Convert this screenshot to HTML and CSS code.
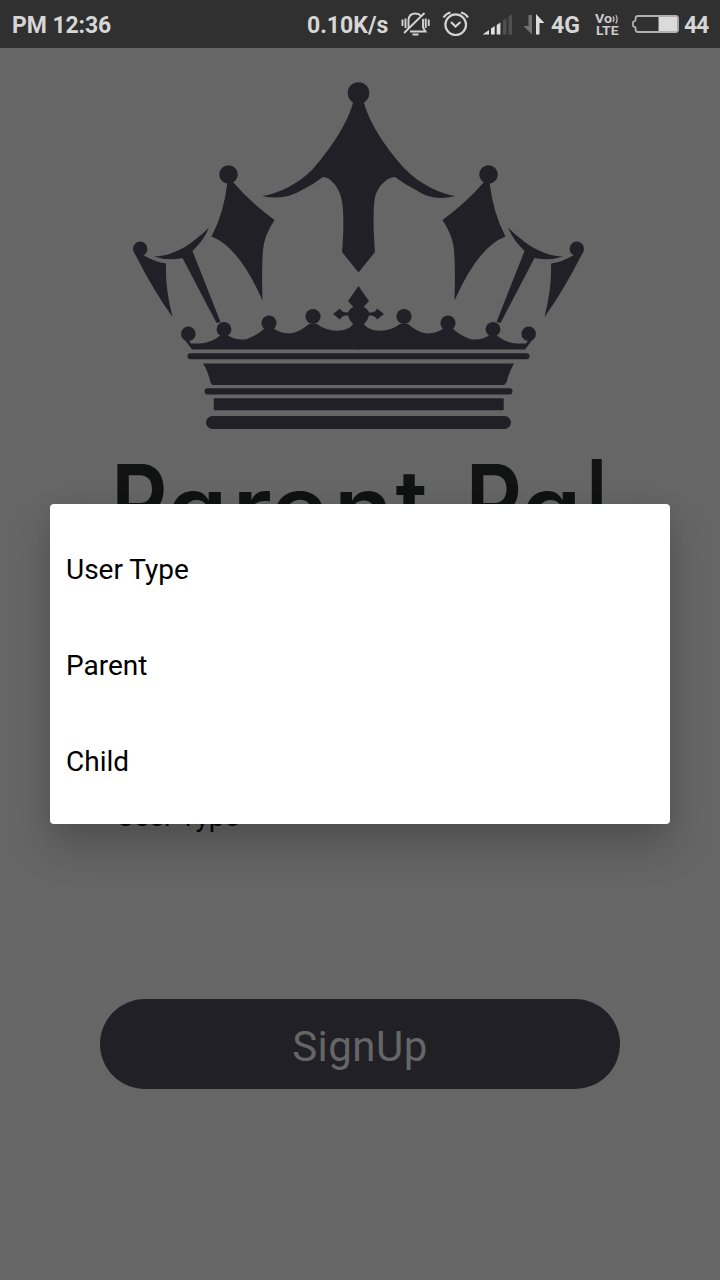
FILE: index.html
```html
<!DOCTYPE html>
<html lang="en">
<head>
<meta charset="utf-8">
<title>Parent Pal</title>
<link rel="stylesheet" href="styles.css">
</head>
<body>
<div class="screen">
  <header class="status">
    <span class="time">PM 12:36</span>
    <span class="speed">0.10K/s</span>
    <svg class="icons" width="152" height="48" viewBox="396 0 152 48">
      <g fill="none" stroke="#d2d2d2" stroke-width="1.9">
        <path d="M408.500 28V20Q409 13.500 415.500 13.500Q419 13.500 421 16M423 19V27.500L425.500 31.500H410M404 33L424.500 13M412.500 34.500H418.500"/>
        <path d="M402.500 19.500V26M405.500 18.500V28M425.700 18.500V28M428.700 19.500V26"/>
        <circle cx="455.700" cy="24.700" r="10.300" stroke-width="2.200"/>
        <path d="M451 22L455.500 26.500L460.500 22M443.500 17.500Q446 13.500 450.500 12.500M461 12.500Q465.500 13.500 468 17.500" stroke-width="2.200"/>
      </g>
      <path fill="#dedede" d="M482.500 34.500L489 30V34.500ZM491 34.500V28.500L494.700 26V34.500ZM496.700 34.500V25L500.400 22.500V34.500Z"/>
      <path fill="#505050" d="M508.500 17L512 14V34.500H508.500Z"/>
      <path fill="#505050" d="M503 20.500L506.500 18V34.500H503Z"/>
      <path fill="#727272" d="M528.500 15H532V34.500L523.500 26H528.500Z"/>
      <path fill="#dedede" d="M536 14L544.500 23H539.500V34.500H536Z"/>
    </svg>
    <span class="net">4G</span>
    <svg class="volte" width="26" height="48" viewBox="594 0 26 48">
      <text class="volte-text" x="595" y="23" textLength="17" lengthAdjust="spacingAndGlyphs">Vo</text>
      <text class="volte-text" x="596" y="34.700" textLength="22.500" lengthAdjust="spacingAndGlyphs">LTE</text>
      <path fill="none" stroke="#bdbdbd" stroke-width="1.300" d="M613 16.500Q615 19 613 22M615.800 15Q618.500 19 615.800 23.500"/>
    </svg>
    <svg class="battery" width="48" height="48" viewBox="632 0 48 48">
      <path d="M638 16H675.500Q678 16 678 18.500V29.500Q678 32 675.500 32H638Q635.500 32 635.500 29V27.500L633 26V22L635.500 20.500V19Q635.500 16 638 16Z" fill="none" stroke="#b0b0b0" stroke-width="1.800"/>
      <path d="M658.500 17H677V31H658.500Z" fill="#dadada"/>
    </svg>
    <span class="level">44</span>
  </header>
  <main class="page">
    <svg class="logo" width="720" height="480" viewBox="0 48 720 480">
      <g fill="#212026">
        <circle cx="358.500" cy="93" r="10.800"/>
        <path d="M353.500 101H363.500C369 124 389 152 406 170C420 184 440 194 455.500 196Q433 202 416 190Q404 184 395 177C387 177 378 186 375 197C373 208 373 229 375 252L358.500 272.500L342 252C344 229 344 208 341 197C338 186 330 177 323 177Q314 184 302 190Q284 201 262 196C278 194 298 184 312 170C328 152 348 124 353.500 101Z"/>
        <g id="side">
          <circle cx="228.500" cy="174.500" r="9.300"/>
          <path d="M227.500 182H233Q250 202 274.500 220Q264 236 263 250Q261.500 268 262.500 300.500Q239 247 211.500 236.500Q224 213 227.500 182Z"/>
          <circle cx="140.200" cy="248.800" r="7.200"/>
          <path d="M134.500 253L144 255.500Q155 262 166 263.500Q165 288 172.500 317Q153 290 134.500 253Z"/>
          <path d="M154 256.500C175 256 192 244 209 227.500Q204 240 192.500 251L220.500 322L216.500 323L182.500 258Q167 261 154 256.500Z"/>
          <circle cx="188.300" cy="333.800" r="7.300"/>
          <circle cx="224" cy="329.300" r="7.400"/>
          <circle cx="269" cy="323" r="7.600"/>
          <circle cx="313" cy="316.500" r="7.600"/>
          <path d="M359.500 322L354 324Q350 328 344 330C334 332 325 330 317 324H309Q301 331 293 333Q282 335 273 328H265Q258 335 247 339Q237 341 227 335H221Q211 343 200 343.500H191L188 339L184 339L192 349.500H359.500Z"/>
        </g>
        <use href="#side" transform="matrix(-1 0 0 1 717 0)"/>
        <path d="M358.500 286L369 301L363.500 307Q367 308 369 312.500Q376 313 377 308.500L384 314L377 319.500Q375 315 369 315.500Q368 320 364 324L368 330H349L353 324Q349 320 348 315.500Q342 315 340 319.500L333 314L340 308.500Q342 313 348 312.500Q350 308 353.500 307L348 301Z"/>
        <rect x="187.500" y="353.300" width="342" height="6" rx="3"/>
        <path d="M203 363.500H514Q509 372 506.500 382.500L504 385H212.500L210.500 382.500Q208 371 203 363.500Z"/>
        <rect x="204.500" y="388.300" width="308" height="6.200" rx="3"/>
        <rect x="213.700" y="398.300" width="290" height="12" rx="1"/>
        <rect x="206" y="416" width="305" height="13" rx="6.500"/>
      </g>
      <g class="brand">
        <text class="cap" transform="translate(111 539) scale(.85 1)">P</text>
        <text class="low" transform="translate(167.500 539) scale(1.1 1)">a</text>
        <text class="low" transform="translate(232.500 539) scale(1.14 1)">r</text>
        <text class="low" transform="translate(271 539) scale(1.1 1)">e</text>
        <text class="low" transform="translate(334 539) scale(1.1 1)">n</text>
        <text class="tee" transform="translate(395.500 535)">t</text>
        <text class="cap" transform="translate(465.500 539) scale(.85 1)">P</text>
        <text class="low" transform="translate(521.500 539) scale(1.1 1)">a</text>
        <text class="ell" transform="translate(586.500 535) scale(.75 1)">l</text>
      </g>
    </svg>
    <div class="spinner">User Type</div>
    <div class="signup">SignUp</div>
  </main>
  <div class="popup">
    <div class="option">User Type</div>
    <div class="option">Parent</div>
    <div class="option">Child</div>
  </div>
</div>
</body>
</html>
```
FILE: styles.css
```css
body {
  margin: 0;
  font-family: Roboto, "Liberation Sans", sans-serif;
}
.screen {
  position: relative;
  width: 720px;
  height: 1280px;
  overflow: hidden;
  background: #666;
  display: flex;
  flex-direction: column;
}
.status {
  height: 48px;
  box-sizing: border-box;
  padding: 0 10px 0 12px;
  display: flex;
  align-items: center;
  background: #303030;
  color: #d6d6d6;
  font-size: 23px;
  font-weight: 700;
  line-height: 48px;
  white-space: nowrap;
}
.status span {
  flex: none;
  padding-top: 3px;
}
.time {
  width: 295px;
  letter-spacing: -0.1px;
}
.speed { width: 89px; }
.status .net { width: 43px; padding-left: 3px; }
.status svg { flex: none; }
.battery { margin-left: 12px; }
.level {
  margin-left: 4px;
  letter-spacing: -1.2px;
}
.volte-text {
  fill: #cacaca;
  font-size: 12px;
  font-weight: 700;
}
.page {
  flex: 1;
  display: flex;
  flex-direction: column;
}
.logo { display: block; }
.brand {
  fill: #111312;
  font-family: Inter, "Liberation Sans", sans-serif;
  font-weight: 600;
  font-feature-settings: "cv11";
}
.cap { font-size: 103px; }
.low { font-size: 87px; }
.tee { font-size: 90px; }
.ell { font-size: 105px; }
.spinner {
  margin: 272px 0 0 116.500px;
  height: 32px;
  font-size: 28px;
  line-height: 33px;
  color: #080808;
}
.signup {
  margin: 167px 100px 0;
  height: 90px;
  border-radius: 45px;
  background: #212026;
  color: #666;
  font-size: 42px;
  line-height: 96px;
  letter-spacing: 0.5px;
  text-align: center;
}
.popup {
  position: absolute;
  left: 50px;
  top: 504px;
  width: 620px;
  height: 320px;
  box-sizing: border-box;
  padding: 16px 0;
  border-radius: 4px;
  background: #fff;
  box-shadow: 0 22px 42px rgba(0, 0, 0, 0.22), 0 0 18px rgba(0, 0, 0, 0.05);
}
.option {
  height: 96px;
  padding-left: 16px;
  font-size: 28px;
  line-height: 99px;
  color: #000;
}
```
